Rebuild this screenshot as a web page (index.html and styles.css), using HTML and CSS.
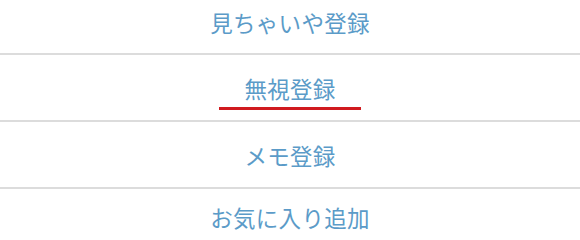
FILE: index.html
```html
<!DOCTYPE html>
<html lang="ja">
<head>
<meta charset="utf-8">
<title>メニュー</title>
<link rel="stylesheet" href="styles.css">
</head>
<body>
<ul class="menu">
  <li class="item item-first"><span class="label">見ちゃいや登録</span></li>
  <li class="item"><span class="label label-marked">無視登録</span></li>
  <li class="item"><span class="label">メモ登録</span></li>
  <li class="item item-last"><span class="label">お気に入り追加</span></li>
</ul>
</body>
</html>
```
FILE: styles.css
```css
html, body {
  margin: 0;
  padding: 0;
  background: #ffffff;
}
body {
  width: 580px;
  height: 239px;
  overflow: hidden;
  font-family: "Noto Sans CJK JP", "Noto Sans", sans-serif;
}
.menu {
  list-style: none;
  margin: 0;
  padding: 0;
}
.item {
  height: 65px;
  display: flex;
  align-items: center;
  justify-content: center;
  border-bottom: 2px solid #dcdcdc;
}
.item-first {
  height: 53px;
  align-items: flex-end;
}
.item-first .label {
  margin-bottom: 16px;
}
.item-last {
  height: 50px;
  border-bottom: none;
  align-items: flex-start;
}
.item-last .label {
  margin-top: 13px;
}
.label {
  font-size: 22.5px;
  line-height: 30px;
  color: #5b9bc8;
  letter-spacing: 0.3px;
}
.label-marked {
  position: relative;
  display: inline-block;
}
.label-marked::after {
  content: "";
  position: absolute;
  left: -25px;
  right: -25px;
  bottom: -7px;
  height: 3px;
  background: #d01a1f;
}
```
